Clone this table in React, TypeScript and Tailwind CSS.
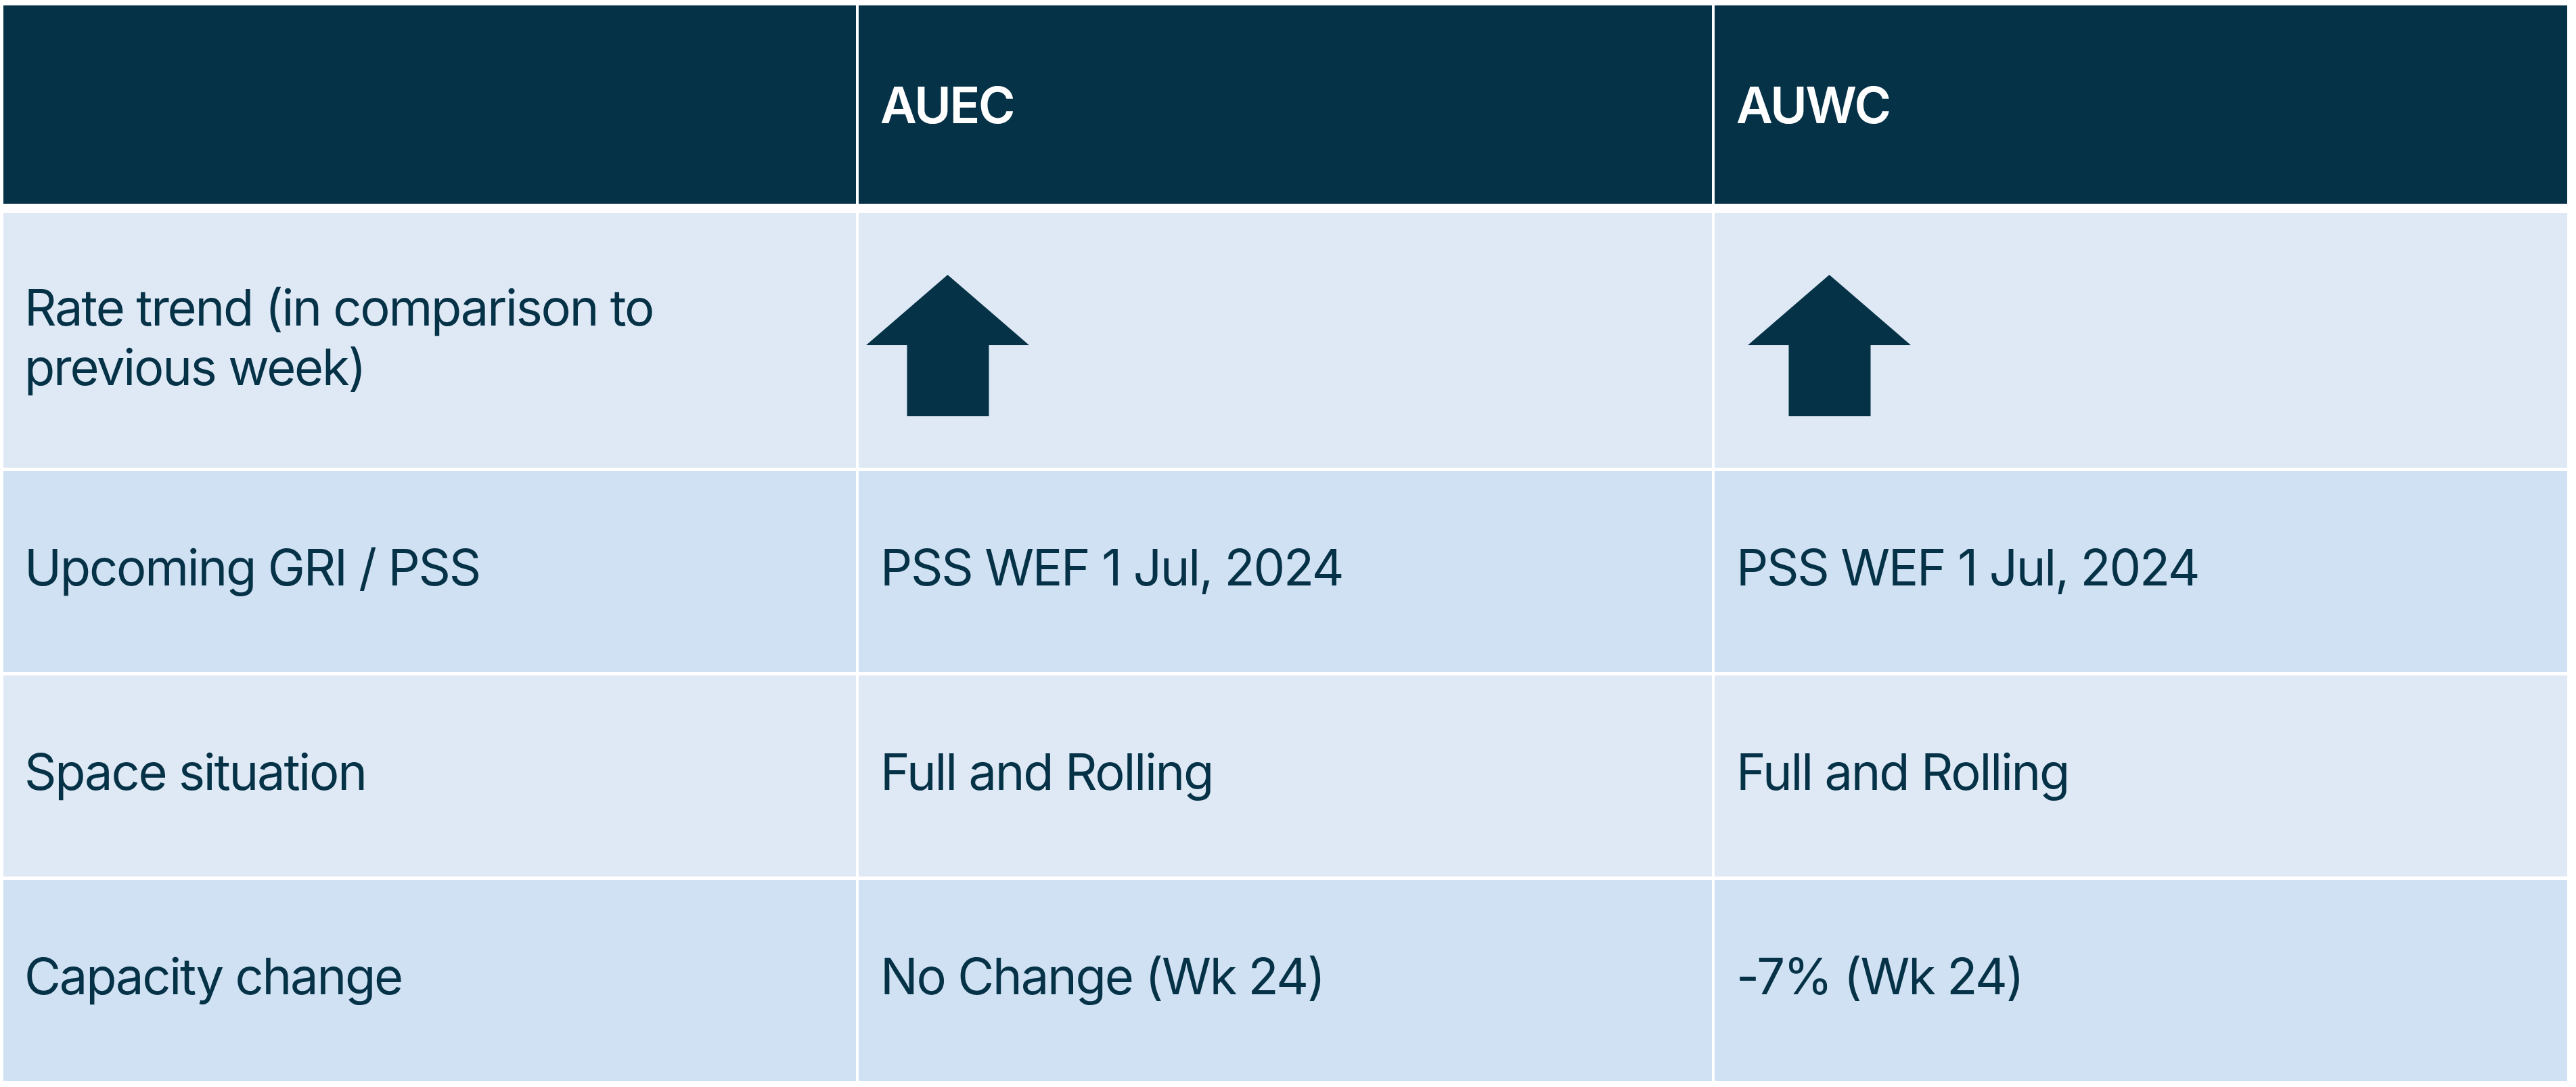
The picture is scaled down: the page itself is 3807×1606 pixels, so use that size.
import React from "react";

// Filled up arrow used in the "Rate trend" row
function UpArrow({ className }: { className?: string }) {
  return (
    <svg className={className} width="241" height="209" viewBox="0 0 241 209" aria-hidden="true">
      <polygon points="120.5,0 241,104 181.5,104 181.5,209 60.5,209 60.5,104 0,104" fill="#063247" />
    </svg>
  );
}

const rows = [
  { label: "Upcoming GRI / PSS", auec: "PSS WEF 1 Jul, 2024", auwc: "PSS WEF 1 Jul, 2024", bg: "bg-[#cfe1f2]" },
  { label: "Space situation", auec: "Full and Rolling", auwc: "Full and Rolling", bg: "bg-[#dee9f5]" },
  { label: "Capacity change", auec: "No Change (Wk 24)", auwc: "-7% (Wk 24)", bg: "bg-[#cfe1f2]" },
];

export default function App() {
  return (
    <div
      className="w-[3807px] h-[1606px] bg-white pt-[8px] pl-[5px] text-[74px] leading-[88px] tracking-[-0.03em] text-[#063247]"
      style={{ fontFamily: "Inter, 'Noto Sans', sans-serif" }}
    >
      {/* header */}
      <div className="grid grid-cols-[1260px_1261px_1260px] gap-x-[4px] h-[293px]">
        <div className="bg-[#063247]" />
        <div className="bg-[#063247] flex items-center pl-[32px] font-semibold text-white">AUEC</div>
        <div className="bg-[#063247] flex items-center pl-[32px] font-semibold text-white">AUWC</div>
      </div>

      <div className="mt-[14px] flex flex-col gap-y-[5px]">
        <div className="grid grid-cols-[1260px_1261px_1260px] gap-x-[4px] h-[376px]">
          <div className="bg-[#dee9f5] flex items-center pl-[31px] pr-[20px] pb-[10px]">
            <span>Rate trend (in comparison to previous week)</span>
          </div>
          <div className="bg-[#dee9f5] pt-[91px] pl-[11px]">
            <UpArrow className="block" />
          </div>
          <div className="bg-[#dee9f5] pt-[91px] pl-[49px]">
            <UpArrow className="block" />
          </div>
        </div>

        {rows.map((r) => (
          <div key={r.label} className="grid grid-cols-[1260px_1261px_1260px] gap-x-[4px] h-[297px]">
            <div className={`${r.bg} flex items-center pl-[31px] pb-[14px]`}>{r.label}</div>
            <div className={`${r.bg} flex items-center pl-[32px] pb-[14px]`}>{r.auec}</div>
            <div className={`${r.bg} flex items-center pl-[32px] pb-[14px]`}>{r.auwc}</div>
          </div>
        ))}
      </div>
    </div>
  );
}
